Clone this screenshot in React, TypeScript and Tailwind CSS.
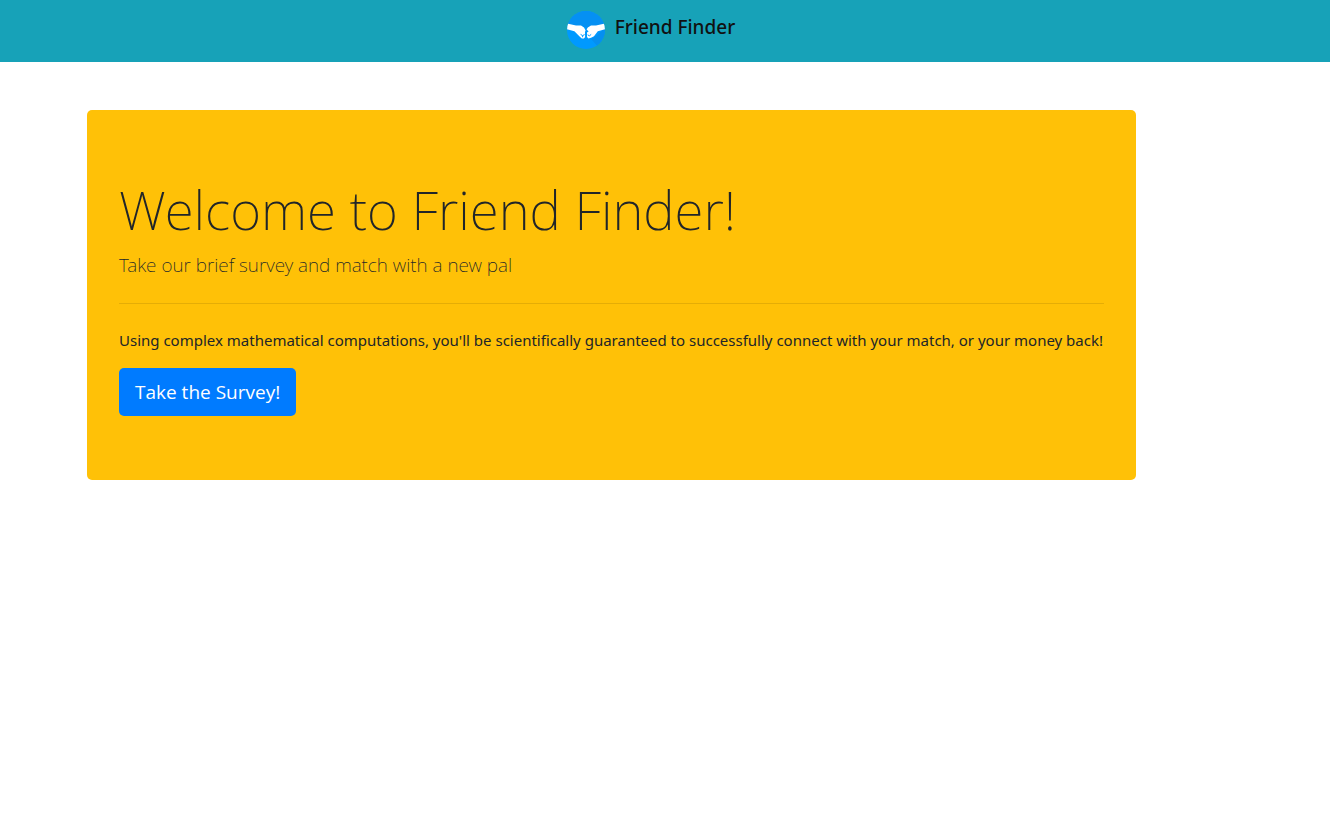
function FistBumpLogo() {
  return (
    <svg viewBox="0 0 38 38" className="mt-[3px] size-[38px]" aria-hidden="true">
      <defs>
        <clipPath id="disc">
          <circle cx="19" cy="19" r="19" />
        </clipPath>
      </defs>
      <g clipPath="url(#disc)">
        <rect width="38" height="38" fill="#0099ff" />
        <path d="M0 0H38V14L22 17L0 13Z" fill="#0590f3" />
        <path d="M29 25L38 17V38H33L24 28Z" fill="#058ff0" />
        <path
          d="M0 12.4L9 14.4L14 14.6L17 16.4L18.6 19.4L18 21L18.2 26L16.8 27.6L14.8 27.4L12.6 25.6L7.4 20.2L0 18.3Z"
          fill="#fff"
        />
        <path
          d="M38 12.4L29 14.4L24 14.6L20.8 16.4L19.6 18.6L21.6 20.4L20 21.6L20 26L21.4 27.6L24 26.8L27 25.2L30.8 20.2L38 18.3Z"
          fill="#fff"
        />
        <path
          d="M13.6 23.4L15.6 24.6L17.6 23.6M15.6 24.6V26.2M20.6 23.8L22.4 24.8L24.2 23.4M18.9 20.6V27"
          fill="none"
          stroke="#0099ff"
          strokeWidth="1"
        />
      </g>
    </svg>
  );
}

export default function App() {
  return (
    <div className="min-h-screen bg-white font-['Noto_Sans',sans-serif] text-[#212529]">
      <nav className="flex h-[62px] items-start justify-center bg-[#17a2b8] pt-2 pr-7">
        <a href="#" className="flex gap-[10px] text-[19px] leading-[38px] font-medium text-[#111]">
          <FistBumpLogo />
          <span>Friend Finder</span>
        </a>
      </nav>
      <main className="px-[87px] pt-12">
        <section className="max-w-[1049px] rounded-[5px] bg-[#ffc107] px-8 py-16">
          <h1 className="mb-2 pt-1 text-[53px] leading-[64px] font-extralight">Welcome to Friend Finder!</h1>
          <p className="text-[19px] leading-[30px] font-extralight">Take our brief survey and match with a new pal</p>
          <hr className="mt-[23px] mb-6 border-black/10" />
          <p className="mb-4 text-[15px] leading-6">
            Using complex mathematical computations, you'll be scientifically guaranteed to successfully connect with your match, or your money back!
          </p>
          <a href="#" className="inline-block rounded-[5px] bg-[#007bff] px-4 py-[9px] font-['Open_Sans',sans-serif] text-[19px] leading-[30px] text-white">
            Take the Survey!
          </a>
        </section>
      </main>
    </div>
  );
}
